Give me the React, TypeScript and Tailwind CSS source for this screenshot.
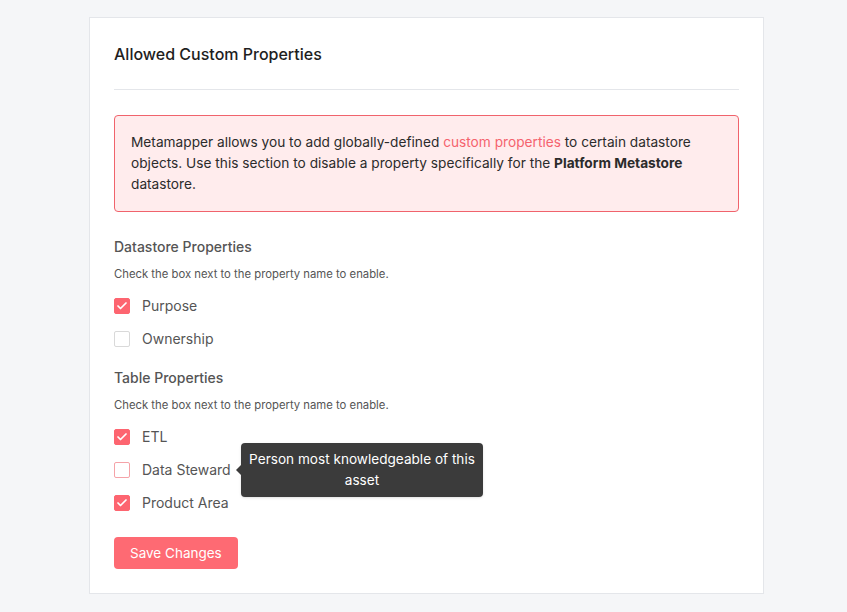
import { Check } from "lucide-react";

type Prop = { label: string; checked: boolean; hint?: string };

const datastoreProps: Prop[] = [
  { label: "Purpose", checked: true },
  { label: "Ownership", checked: false },
];

const tableProps: Prop[] = [
  { label: "ETL", checked: true },
  { label: "Data Steward", checked: false, hint: "Person most knowledgeable of this asset" },
  { label: "Product Area", checked: true },
];

const PropertyRow = ({ prop }: { prop: Prop }) => {
  return (
    <div className="relative flex items-center h-5 gap-3">
      <span
        className={`flex items-center justify-center w-4 h-4 rounded-[2px] ${
          prop.checked
            ? "bg-[#fd6570] border border-[#fd6570]"
            : prop.hint
            ? "bg-white border border-[#f5a3a8]"
            : "bg-white border border-[#d9d9d9]"
        }`}
      >
        {prop.checked && <Check className="w-3 h-3 text-white" strokeWidth={3.5} />}
      </span>
      <span className="text-sm text-[#555]">{prop.label}</span>

      {/* tooltip */}
      {prop.hint && (
        <div className="absolute left-[127px] top-[-17px] w-[242px] rounded bg-[#3b3b3b] px-2 py-[6px] text-center text-[13.6px] leading-[21px] text-white shadow">
          <span className="absolute left-[-5px] top-[22px] w-0 h-0 border-y-[5px] border-y-transparent border-r-[5px] border-r-[#3b3b3b]" />
          {prop.hint}
        </div>
      )}
    </div>
  );
};

const PropertySection = ({ title, items }: { title: string; items: Prop[] }) => {
  return (
    <div>
      <h3 className="text-sm leading-5 font-medium text-[#555]">{title}</h3>
      <p className="mt-[9px] text-[11.3px] leading-4 text-[#555]">
        Check the box next to the property name to enable.
      </p>
      <div className="mt-[14px] flex flex-col gap-[13px]">
        {items.map((p) => (
          <PropertyRow key={p.label} prop={p} />
        ))}
      </div>
    </div>
  );
};

export default function App() {
  return (
    <div
      className="min-h-[612px] bg-[#f5f6f8] pt-[17px] pb-[18px]"
      style={{ fontFamily: "Inter, 'Noto Sans', sans-serif" }}
    >
      <div className="ml-[89px] w-[675px] bg-white border border-[#e4e6ea] px-6 pt-[25px] pb-6">
        {/* heading */}
        <div className="border-b border-b-[#e4e6ea] pb-6">
          <h2 className="text-base leading-[22px] font-medium text-[#1e1e1e]">
            Allowed Custom Properties
          </h2>
        </div>

        <div className="mt-[25px] rounded border border-[#f0636c] bg-[#ffeced] px-4 py-4 text-[13.7px] leading-[21px] text-[#2b2b2b]">
          Metamapper allows you to add globally-defined{" "}
          <a className="text-[#f5636e]">custom properties</a> to certain datastore objects. Use this
          section to disable a property specifically for the{" "}
          <span className="font-bold">Platform Metastore</span> datastore.
        </div>

        <div className="mt-[25px]">
          <PropertySection title="Datastore Properties" items={datastoreProps} />
        </div>
        <div className="mt-[19px]">
          <PropertySection title="Table Properties" items={tableProps} />
        </div>

        <button className="mt-6 h-8 rounded bg-[#fe6a73] px-4 text-[13.5px] text-white">
          Save Changes
        </button>
      </div>
    </div>
  );
}
